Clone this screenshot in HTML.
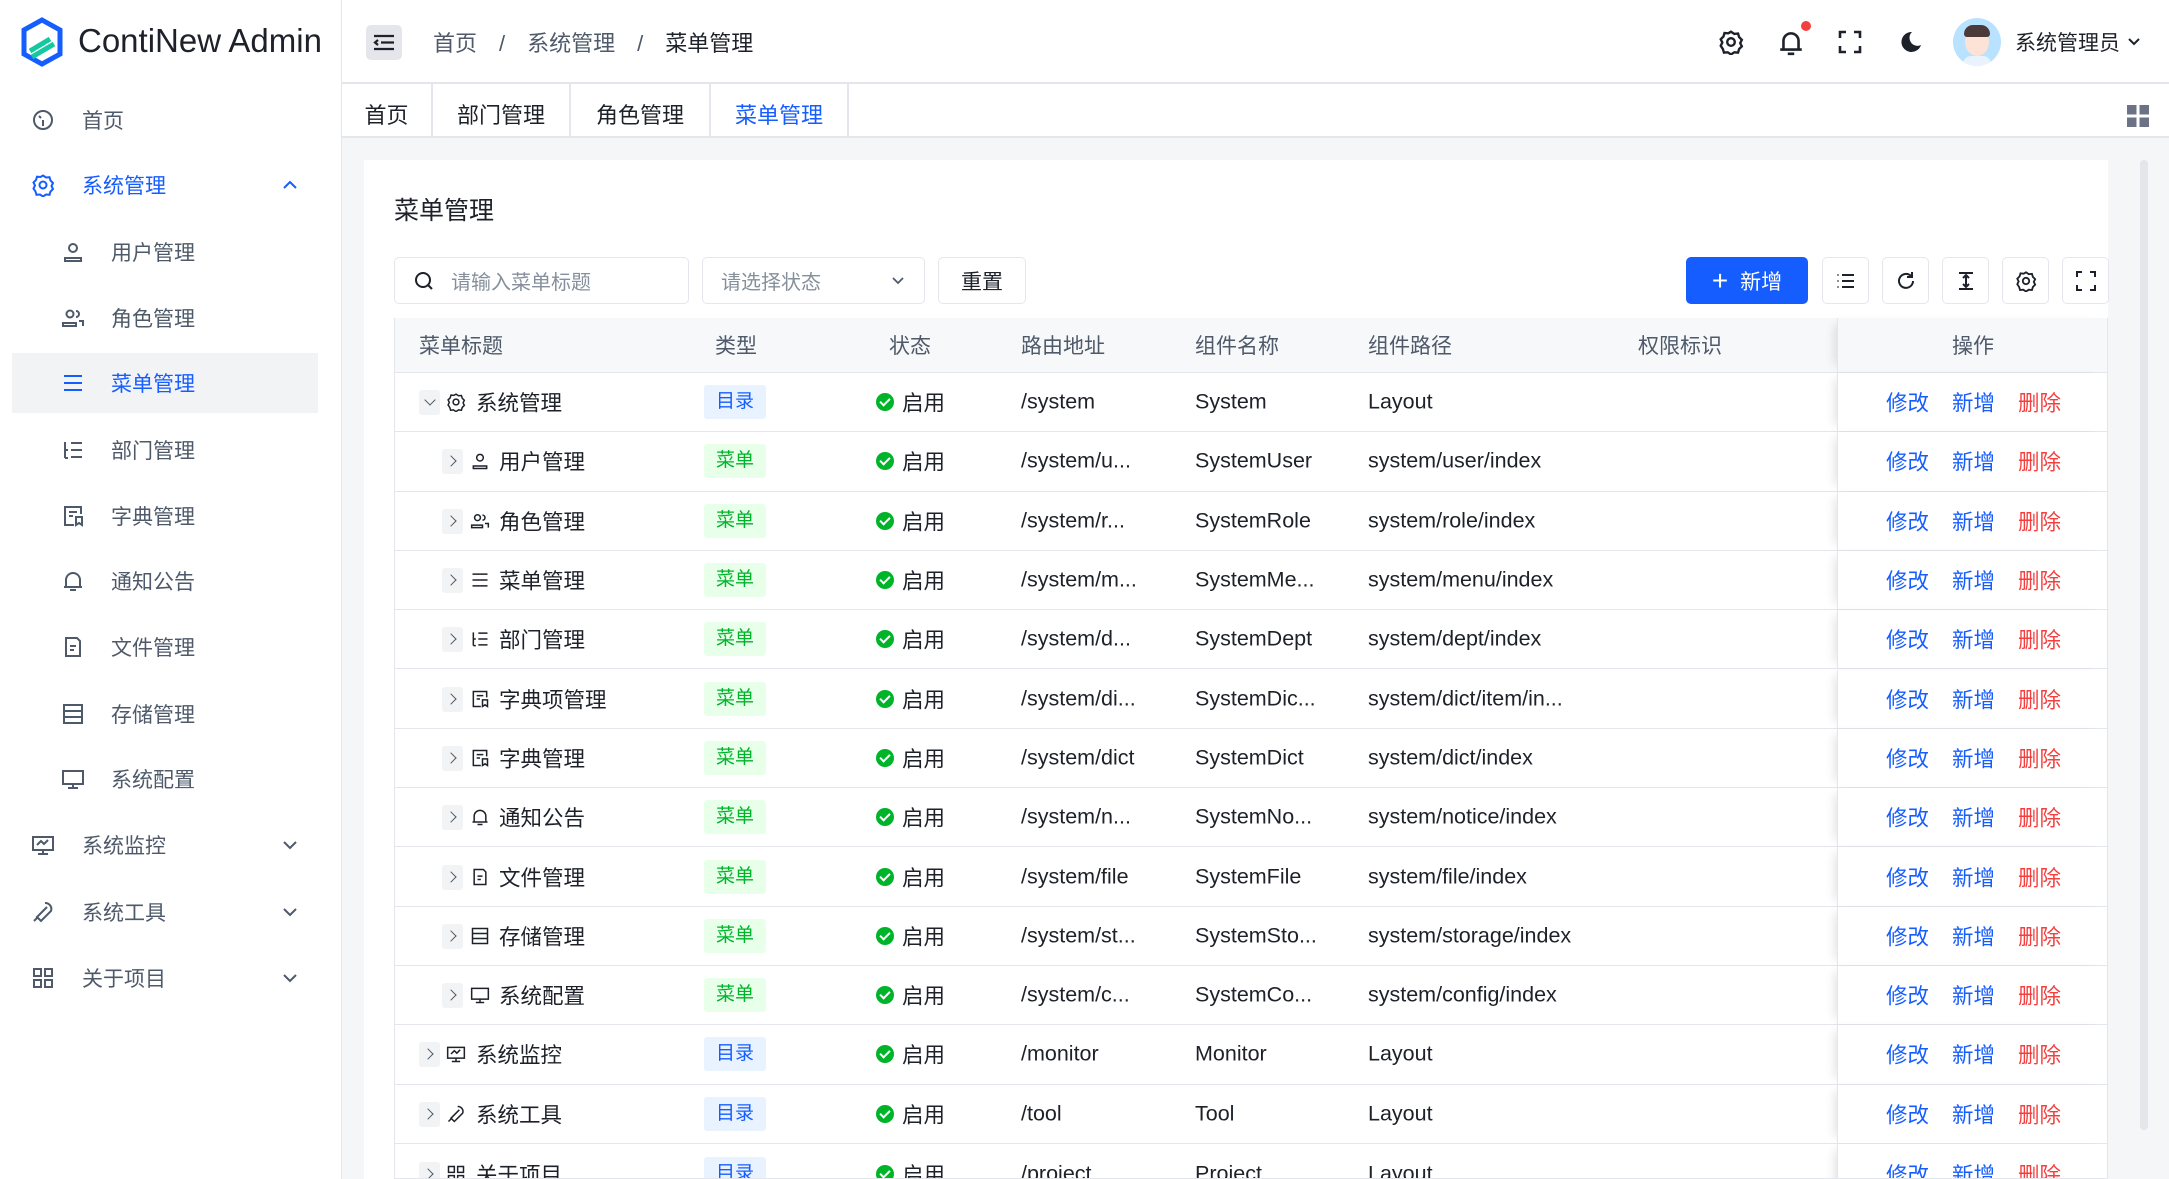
<!DOCTYPE html>
<html><head><meta charset="utf-8"><style>
*{box-sizing:border-box;margin:0;padding:0}
html{width:2169px;height:1179px;overflow:hidden}
body{width:2169px;height:1179px;overflow:hidden;background:#f5f6f8;font-family:"Liberation Sans","Noto Sans CJK SC",sans-serif;color:#1d2129;position:relative}
.a{position:absolute}
.side{left:0;top:0;width:342px;height:1179px;background:#fff;border-right:1px solid #e5e6eb}
.mi{position:absolute;left:0;width:330px;height:60px;display:flex;align-items:center;font-size:21px;color:#4e5969}
.mi svg{position:absolute;width:24px;height:24px;fill:none;stroke:#4e5969;stroke-width:2}
.mi svg.ch{left:281px;width:18px;height:18px}
.top{left:342px;top:0;width:1827px;height:84px;background:#fff;border-bottom:2px solid #e5e6eb}
.tabs{left:342px;top:84px;width:1827px;height:54px;background:#fff;border-bottom:2px solid #e5e6eb}
.tab{position:absolute;top:0;height:52px;display:flex;align-items:center;justify-content:center;font-size:22px;color:#1d2129;border-right:2px solid #e5e6eb;padding-top:8px}
.card{left:364px;top:160px;width:1744px;height:1019px;background:#fff}
.btn{position:absolute;top:257px;height:47px;border:1.5px solid #e5e6eb;border-radius:5px;background:#fff;display:flex;align-items:center;justify-content:center}
.ib{width:47px}
.ib svg{width:22px;height:22px;fill:none;stroke:#1d2129;stroke-width:2}
.th{left:394px;top:318px;width:1714px;height:55px;background:#f7f8fa;border-bottom:1px solid #e5e6eb;font-size:21px;color:#4e5969}
.th span,.r span{position:absolute;top:50%;transform:translateY(-50%);white-space:nowrap}
.r{position:absolute;left:394px;width:1714px;height:59.3px;border-bottom:1px solid #e5e6eb;font-size:21.5px;background:#fff}
.ex{position:absolute;top:50%;margin-top:-12px;width:21px;height:25px;background:#f2f3f5;border-radius:3px}
.ex:after{content:"";position:absolute;left:5px;top:8px;width:7px;height:7px;border:solid #4e5969;border-width:0 1.8px 1.8px 0;transform:rotate(-45deg)}
.ex.d:after{left:7px;top:6px;transform:rotate(45deg)}
.ic{position:absolute;top:50%;margin-top:-10px;width:20px;height:20px;fill:none;stroke:#1d2129;stroke-width:1.8}
.tg{position:absolute;left:310px;top:50%;margin-top:-17px;width:62px;height:34px;border-radius:3px;font-size:19px;text-align:center;line-height:34px}
.dir{background:#e8f3ff;color:#165dff}.men{background:#e8ffea;color:#00b42a}
.dot{position:absolute;left:482px;top:50%;margin-top:-9px;width:18px;height:18px;border-radius:50%;background:#00b42a}
.dot:after{content:"";position:absolute;left:6px;top:3px;width:4px;height:8px;border:solid #fff;border-width:0 2px 2px 0;transform:rotate(45deg)}
.op{position:absolute;left:1443px;top:0;width:271px;height:100%;background:inherit;box-shadow:-8px 0 10px -6px rgba(0,0,0,.12);border-left:1px solid #e5e6eb}
.op b{position:absolute;top:50%;transform:translateY(-50%);font-weight:normal;color:#165dff}
</style></head><body>
<div class="a side">
 <svg class="a" style="left:20px;top:17px" width="44" height="50" viewBox="0 0 44 50"><path d="M22 3 L40 13 V37 L22 47 L4 37 V13 Z" fill="none" stroke="#165dff" stroke-width="5"/><path d="M10 34 L30 22 M12 40 L34 27" stroke="#14c9a0" stroke-width="5"/></svg>
 <div class="a" style="left:78px;top:22px;font-size:33px;color:#1d2129">ContiNew Admin</div>
 <div class="mi" style="top:90px"><svg style="left:31px" viewBox="0 0 24 24"><circle cx="12" cy="12" r="9"/><path d="M12 12v6M8 8l2 2"/></svg><span style="position:absolute;left:82px">首页</span></div>
 <div class="mi" style="top:155px;color:#165dff"><svg style="left:31px;stroke:#165dff" viewBox="0 0 24 24"><circle cx="12" cy="12" r="3.5"/><path d="M12 2.5l3 2 3.5-.3 1 3.3 2.5 2.5-1.5 3 1.5 3-2.5 2.5-1 3.3-3.5-.3-3 2-3-2-3.5.3-1-3.3L2.5 15.5 4 12.5 2.5 9.5 5 7 6 3.7l3.5.3z"/></svg><span style="position:absolute;left:82px">系统管理</span><svg class="ch" style="stroke:#165dff" viewBox="0 0 18 18"><path d="M3 12l6-6 6 6"/></svg></div>
 <div class="mi" style="top:222px"><svg style="left:61px" viewBox="0 0 24 24"><circle cx="12" cy="8" r="4"/><path d="M4 21v-3h16v3z"/></svg><span style="position:absolute;left:111px">用户管理</span></div>
 <div class="mi" style="top:288px"><svg style="left:61px" viewBox="0 0 24 24"><circle cx="9" cy="8" r="3.5"/><path d="M2 20v-3h13v3zM15 5a3 3 0 010 6M18 15h4v5"/></svg><span style="position:absolute;left:111px">角色管理</span></div>
 <div class="mi" style="top:353px;left:12px;width:306px;background:#f2f3f5;color:#165dff"><svg style="left:49px;stroke:#165dff" viewBox="0 0 24 24"><path d="M3 5h18M3 12h18M3 19h18"/></svg><span style="position:absolute;left:99px">菜单管理</span></div>
 <div class="mi" style="top:420px"><svg style="left:61px" viewBox="0 0 24 24"><path d="M4 4v16M4 12h3M4 20h3M10 5h11M10 12h11M10 19h11"/></svg><span style="position:absolute;left:111px">部门管理</span></div>
 <div class="mi" style="top:486px"><svg style="left:61px" viewBox="0 0 24 24"><path d="M20 10V3H4v18h9M8 8h8M8 12h4M15 13h6v8l-3-2-3 2z"/></svg><span style="position:absolute;left:111px">字典管理</span></div>
 <div class="mi" style="top:551px"><svg style="left:61px" viewBox="0 0 24 24"><path d="M5 18V11a7 7 0 0114 0v7zM3 18h18M9 21h6"/></svg><span style="position:absolute;left:111px">通知公告</span></div>
 <div class="mi" style="top:617px"><svg style="left:61px" viewBox="0 0 24 24"><path d="M5 3h11l3 3v15H5zM9 11h6M9 15h4"/></svg><span style="position:absolute;left:111px">文件管理</span></div>
 <div class="mi" style="top:684px"><svg style="left:61px" viewBox="0 0 24 24"><path d="M3 3h18v18H3zM3 9h18M3 15h18"/></svg><span style="position:absolute;left:111px">存储管理</span></div>
 <div class="mi" style="top:749px"><svg style="left:61px" viewBox="0 0 24 24"><path d="M2 4h20v13H2zM12 17v4M7 21h10"/></svg><span style="position:absolute;left:111px">系统配置</span></div>
 <div class="mi" style="top:815px"><svg style="left:31px" viewBox="0 0 24 24"><path d="M2 4h20v13H2zM12 17v4M7 21h10M6 12l4-4 3 3 4-4"/></svg><span style="position:absolute;left:82px">系统监控</span><svg class="ch" viewBox="0 0 18 18"><path d="M3 6l6 6 6-6"/></svg></div>
 <div class="mi" style="top:882px"><svg style="left:31px" viewBox="0 0 24 24"><path d="M14 3a6 6 0 016 8l-10 10-4-4 10-10M3 21l3-3"/></svg><span style="position:absolute;left:82px">系统工具</span><svg class="ch" viewBox="0 0 18 18"><path d="M3 6l6 6 6-6"/></svg></div>
 <div class="mi" style="top:948px"><svg style="left:31px" viewBox="0 0 24 24"><path d="M3 3h7v7H3zM14 3h7v7h-7zM3 14h7v7H3zM14 14h7v7h-7z"/></svg><span style="position:absolute;left:82px">关于项目</span><svg class="ch" viewBox="0 0 18 18"><path d="M3 6l6 6 6-6"/></svg></div>
</div>
<div class="a top">
 <div class="a" style="left:24px;top:25px;width:36px;height:35px;background:#e5e6eb;border-radius:5px"><svg width="36" height="35" viewBox="0 0 36 35" fill="none" stroke="#1d2129" stroke-width="2.2"><path d="M8 11h20M15 17.5h13M8 24h20M12 15l-3 2.5 3 2.5"/></svg></div>
 <div class="a" style="left:91px;top:26px;font-size:22px;color:#4e5969;white-space:nowrap">首页<span style="margin:0 22px">/</span>系统管理<span style="margin:0 22px">/</span><span style="color:#1d2129">菜单管理</span></div>
 <svg class="a" style="left:1376px;top:29px" width="26" height="26" viewBox="0 0 24 24" fill="none" stroke="#1d2129" stroke-width="2.2"><circle cx="12" cy="12" r="3.5"/><path d="M12 2.5l3 2 3.5-.3 1 3.3 2.5 2.5-1.5 3 1.5 3-2.5 2.5-1 3.3-3.5-.3-3 2-3-2-3.5.3-1-3.3L2.5 15.5 4 12.5 2.5 9.5 5 7 6 3.7l3.5.3z"/></svg>
 <svg class="a" style="left:1436px;top:28px" width="26" height="28" viewBox="0 0 24 26" fill="none" stroke="#1d2129" stroke-width="2.4"><path d="M5 20V12a7 7 0 0114 0v8zM2 20h20M9 24h6"/></svg>
 <div class="a" style="left:1459px;top:21px;width:10px;height:10px;border-radius:50%;background:#f53f3f"></div>
 <svg class="a" style="left:1496px;top:30px" width="24" height="24" viewBox="0 0 24 24" fill="none" stroke="#1d2129" stroke-width="2.6"><path d="M2 8V2h6M16 2h6v6M22 16v6h-6M8 22H2v-6"/></svg>
 <svg class="a" style="left:1556px;top:30px" width="24" height="24" viewBox="0 0 24 24"><path d="M14 2a10 10 0 1 0 9 13A8 8 0 0 1 14 2z" fill="#1d2129"/></svg>
 <div class="a" style="left:1611px;top:18px;width:48px;height:48px;border-radius:50%;background:#b8e2ff;overflow:hidden"><div class="a" style="left:12px;top:10px;width:24px;height:28px;border-radius:50%;background:#fde3d6"></div><div class="a" style="left:11px;top:7px;width:26px;height:12px;border-radius:12px 12px 4px 4px;background:#4b3a3a"></div><div class="a" style="left:10px;top:38px;width:28px;height:12px;border-radius:8px 8px 0 0;background:#e8f3ff"></div></div>
 <div class="a" style="left:1673px;top:27px;font-size:21px;color:#1d2129">系统管理员</div>
 <svg class="a" style="left:1784px;top:34px" width="16" height="16" viewBox="0 0 16 16" fill="none" stroke="#1d2129" stroke-width="2"><path d="M3 5l5 5 5-5"/></svg>
</div>
<div class="a tabs">
 <div class="tab" style="left:0;width:91px">首页</div>
 <div class="tab" style="left:91px;width:138px">部门管理</div>
 <div class="tab" style="left:229px;width:140px">角色管理</div>
 <div class="tab" style="left:369px;width:138px;color:#165dff">菜单管理</div>
 <svg class="a" style="left:1785px;top:21px" width="22" height="22" viewBox="0 0 22 22" fill="#6b7385"><rect x="0" y="0" width="9.5" height="9.5"/><rect x="12.5" y="0" width="9.5" height="9.5"/><rect x="0" y="12.5" width="9.5" height="9.5"/><rect x="12.5" y="12.5" width="9.5" height="9.5"/></svg>
</div>
<div class="a" style="left:2140px;top:160px;width:8px;height:970px;background:#e5e6eb;border-radius:4px"></div>
<div class="a card"></div>
<div class="a" style="left:394px;top:191px;font-size:25px;color:#1d2129">菜单管理</div>
<div class="btn" style="left:394px;width:295px;justify-content:flex-start"><svg style="margin-left:18px" width="22" height="22" viewBox="0 0 22 22" fill="none" stroke="#1d2129" stroke-width="2"><circle cx="10" cy="10" r="7"/><path d="M15 15l4 4"/></svg><span style="margin-left:16px;font-size:20px;color:#86909c">请输入菜单标题</span></div>
<div class="btn" style="left:702px;width:223px;justify-content:flex-start"><span style="margin-left:18px;font-size:20px;color:#86909c">请选择状态</span><svg style="position:absolute;right:19px" width="14" height="14" viewBox="0 0 14 14" fill="none" stroke="#4e5969" stroke-width="1.8"><path d="M2 4l5 5 5-5"/></svg></div>
<div class="btn" style="left:938px;width:88px;font-size:21px">重置</div>
<div class="btn" style="left:1686px;width:122px;background:#165dff;border-color:#165dff;color:#fff;font-size:21px"><span style="font-size:28px;margin-right:12px;font-weight:300">+</span>新增</div>
<div class="btn ib" style="left:1822px"><svg viewBox="0 0 22 22"><path d="M7 5h12M7 11h12M7 17h12M2.5 5h1M2.5 11h1M2.5 17h1"/></svg></div>
<div class="btn ib" style="left:1882px"><svg viewBox="0 0 22 22"><path d="M18 11a7 7 0 11-2-5M17 2v5h-5"/></svg></div>
<div class="btn ib" style="left:1942px"><svg viewBox="0 0 22 22"><path d="M4 3h14M4 19h14M11 5v12M8 8l3-3 3 3M8 14l3 3 3-3"/></svg></div>
<div class="btn ib" style="left:2002px"><svg viewBox="0 0 24 24"><circle cx="12" cy="12" r="3.5"/><path d="M12 2.5l3 2 3.5-.3 1 3.3 2.5 2.5-1.5 3 1.5 3-2.5 2.5-1 3.3-3.5-.3-3 2-3-2-3.5.3-1-3.3L2.5 15.5 4 12.5 2.5 9.5 5 7 6 3.7l3.5.3z"/></svg></div>
<div class="btn ib" style="left:2062px"><svg viewBox="0 0 22 22"><path d="M2 7V2h5M15 2h5v5M20 15v5h-5M7 20H2v-5"/></svg></div>

<div class="a th"><span style="left:25px">菜单标题</span><span style="left:321px">类型</span><span style="left:495px">状态</span><span style="left:627px">路由地址</span><span style="left:801px">组件名称</span><span style="left:974px">组件路径</span><span style="left:1244px">权限标识</span><div class="op" style="background:#f7f8fa"><span style="left:114px">操作</span></div></div>

<div class="r" style="top:373px"><div class="ex d" style="left:25px"></div><svg class="ic" style="left:52px" viewBox="0 0 24 24"><circle cx="12" cy="12" r="3.5"/><path d="M12 2.5l3 2 3.5-.3 1 3.3 2.5 2.5-1.5 3 1.5 3-2.5 2.5-1 3.3-3.5-.3-3 2-3-2-3.5.3-1-3.3L2.5 15.5 4 12.5 2.5 9.5 5 7 6 3.7l3.5.3z"/></svg><span style="left:82px">系统管理</span><div class="tg dir">目录</div><div class="dot"></div><span style="left:508px">启用</span><span style="left:627px">/system</span><span style="left:801px">System</span><span style="left:974px">Layout</span><div class="op"><b style="left:48px">修改</b><b style="left:114px">新增</b><b style="left:180px;color:#f53f3f">删除</b></div></div>
<div class="r" style="top:432.3px"><div class="ex" style="left:48px"></div><svg class="ic" style="left:76px" viewBox="0 0 24 24"><circle cx="12" cy="8" r="4"/><path d="M4 21v-3h16v3z"/></svg><span style="left:105px">用户管理</span><div class="tg men">菜单</div><div class="dot"></div><span style="left:508px">启用</span><span style="left:627px">/system/u...</span><span style="left:801px">SystemUser</span><span style="left:974px">system/user/index</span><div class="op"><b style="left:48px">修改</b><b style="left:114px">新增</b><b style="left:180px;color:#f53f3f">删除</b></div></div>
<div class="r" style="top:491.6px"><div class="ex" style="left:48px"></div><svg class="ic" style="left:76px" viewBox="0 0 24 24"><circle cx="9" cy="8" r="3.5"/><path d="M2 20v-3h13v3zM15 5a3 3 0 010 6M18 15h4v5"/></svg><span style="left:105px">角色管理</span><div class="tg men">菜单</div><div class="dot"></div><span style="left:508px">启用</span><span style="left:627px">/system/r...</span><span style="left:801px">SystemRole</span><span style="left:974px">system/role/index</span><div class="op"><b style="left:48px">修改</b><b style="left:114px">新增</b><b style="left:180px;color:#f53f3f">删除</b></div></div>
<div class="r" style="top:550.9px"><div class="ex" style="left:48px"></div><svg class="ic" style="left:76px" viewBox="0 0 24 24"><path d="M3 5h18M3 12h18M3 19h18"/></svg><span style="left:105px">菜单管理</span><div class="tg men">菜单</div><div class="dot"></div><span style="left:508px">启用</span><span style="left:627px">/system/m...</span><span style="left:801px">SystemMe...</span><span style="left:974px">system/menu/index</span><div class="op"><b style="left:48px">修改</b><b style="left:114px">新增</b><b style="left:180px;color:#f53f3f">删除</b></div></div>
<div class="r" style="top:610.2px"><div class="ex" style="left:48px"></div><svg class="ic" style="left:76px" viewBox="0 0 24 24"><path d="M4 4v16M4 12h3M4 20h3M10 5h11M10 12h11M10 19h11"/></svg><span style="left:105px">部门管理</span><div class="tg men">菜单</div><div class="dot"></div><span style="left:508px">启用</span><span style="left:627px">/system/d...</span><span style="left:801px">SystemDept</span><span style="left:974px">system/dept/index</span><div class="op"><b style="left:48px">修改</b><b style="left:114px">新增</b><b style="left:180px;color:#f53f3f">删除</b></div></div>
<div class="r" style="top:669.5px"><div class="ex" style="left:48px"></div><svg class="ic" style="left:76px" viewBox="0 0 24 24"><path d="M20 10V3H4v18h9M8 8h8M8 12h4M15 13h6v8l-3-2-3 2z"/></svg><span style="left:105px">字典项管理</span><div class="tg men">菜单</div><div class="dot"></div><span style="left:508px">启用</span><span style="left:627px">/system/di...</span><span style="left:801px">SystemDic...</span><span style="left:974px">system/dict/item/in...</span><div class="op"><b style="left:48px">修改</b><b style="left:114px">新增</b><b style="left:180px;color:#f53f3f">删除</b></div></div>
<div class="r" style="top:728.8px"><div class="ex" style="left:48px"></div><svg class="ic" style="left:76px" viewBox="0 0 24 24"><path d="M20 10V3H4v18h9M8 8h8M8 12h4M15 13h6v8l-3-2-3 2z"/></svg><span style="left:105px">字典管理</span><div class="tg men">菜单</div><div class="dot"></div><span style="left:508px">启用</span><span style="left:627px">/system/dict</span><span style="left:801px">SystemDict</span><span style="left:974px">system/dict/index</span><div class="op"><b style="left:48px">修改</b><b style="left:114px">新增</b><b style="left:180px;color:#f53f3f">删除</b></div></div>
<div class="r" style="top:788.1px"><div class="ex" style="left:48px"></div><svg class="ic" style="left:76px" viewBox="0 0 24 24"><path d="M5 18V11a7 7 0 0114 0v7zM3 18h18M9 21h6"/></svg><span style="left:105px">通知公告</span><div class="tg men">菜单</div><div class="dot"></div><span style="left:508px">启用</span><span style="left:627px">/system/n...</span><span style="left:801px">SystemNo...</span><span style="left:974px">system/notice/index</span><div class="op"><b style="left:48px">修改</b><b style="left:114px">新增</b><b style="left:180px;color:#f53f3f">删除</b></div></div>
<div class="r" style="top:847.4px"><div class="ex" style="left:48px"></div><svg class="ic" style="left:76px" viewBox="0 0 24 24"><path d="M5 3h11l3 3v15H5zM9 11h6M9 15h4"/></svg><span style="left:105px">文件管理</span><div class="tg men">菜单</div><div class="dot"></div><span style="left:508px">启用</span><span style="left:627px">/system/file</span><span style="left:801px">SystemFile</span><span style="left:974px">system/file/index</span><div class="op"><b style="left:48px">修改</b><b style="left:114px">新增</b><b style="left:180px;color:#f53f3f">删除</b></div></div>
<div class="r" style="top:906.7px"><div class="ex" style="left:48px"></div><svg class="ic" style="left:76px" viewBox="0 0 24 24"><path d="M3 3h18v18H3zM3 9h18M3 15h18"/></svg><span style="left:105px">存储管理</span><div class="tg men">菜单</div><div class="dot"></div><span style="left:508px">启用</span><span style="left:627px">/system/st...</span><span style="left:801px">SystemSto...</span><span style="left:974px">system/storage/index</span><div class="op"><b style="left:48px">修改</b><b style="left:114px">新增</b><b style="left:180px;color:#f53f3f">删除</b></div></div>
<div class="r" style="top:966px"><div class="ex" style="left:48px"></div><svg class="ic" style="left:76px" viewBox="0 0 24 24"><path d="M2 4h20v13H2zM12 17v4M7 21h10"/></svg><span style="left:105px">系统配置</span><div class="tg men">菜单</div><div class="dot"></div><span style="left:508px">启用</span><span style="left:627px">/system/c...</span><span style="left:801px">SystemCo...</span><span style="left:974px">system/config/index</span><div class="op"><b style="left:48px">修改</b><b style="left:114px">新增</b><b style="left:180px;color:#f53f3f">删除</b></div></div>
<div class="r" style="top:1025.3px"><div class="ex" style="left:25px"></div><svg class="ic" style="left:52px" viewBox="0 0 24 24"><path d="M2 4h20v13H2zM12 17v4M7 21h10M6 12l4-4 3 3 4-4"/></svg><span style="left:82px">系统监控</span><div class="tg dir">目录</div><div class="dot"></div><span style="left:508px">启用</span><span style="left:627px">/monitor</span><span style="left:801px">Monitor</span><span style="left:974px">Layout</span><div class="op"><b style="left:48px">修改</b><b style="left:114px">新增</b><b style="left:180px;color:#f53f3f">删除</b></div></div>
<div class="r" style="top:1084.6px"><div class="ex" style="left:25px"></div><svg class="ic" style="left:52px" viewBox="0 0 24 24"><path d="M14 3a6 6 0 016 8l-10 10-4-4 10-10M3 21l3-3"/></svg><span style="left:82px">系统工具</span><div class="tg dir">目录</div><div class="dot"></div><span style="left:508px">启用</span><span style="left:627px">/tool</span><span style="left:801px">Tool</span><span style="left:974px">Layout</span><div class="op"><b style="left:48px">修改</b><b style="left:114px">新增</b><b style="left:180px;color:#f53f3f">删除</b></div></div>
<div class="r" style="top:1143.9px;height:35.1px;overflow:hidden"><div style="position:absolute;left:0;top:0;width:100%;height:59.3px"><div class="ex" style="left:25px"></div><svg class="ic" style="left:52px" viewBox="0 0 24 24"><path d="M3 3h7v7H3zM14 3h7v7h-7zM3 14h7v7H3zM14 14h7v7h-7z"/></svg><span style="left:82px">关于项目</span><div class="tg dir">目录</div><div class="dot"></div><span style="left:508px">启用</span><span style="left:627px">/project</span><span style="left:801px">Project</span><span style="left:974px">Layout</span><div class="op" style="background:#fff"><b style="left:48px">修改</b><b style="left:114px">新增</b><b style="left:180px;color:#f53f3f">删除</b></div></div></div>
<div class="a" style="left:394px;top:318px;width:1px;height:861px;background:#e5e6eb"></div>
<div class="a" style="left:2107px;top:318px;width:1px;height:861px;background:#e5e6eb"></div>
</body></html>
